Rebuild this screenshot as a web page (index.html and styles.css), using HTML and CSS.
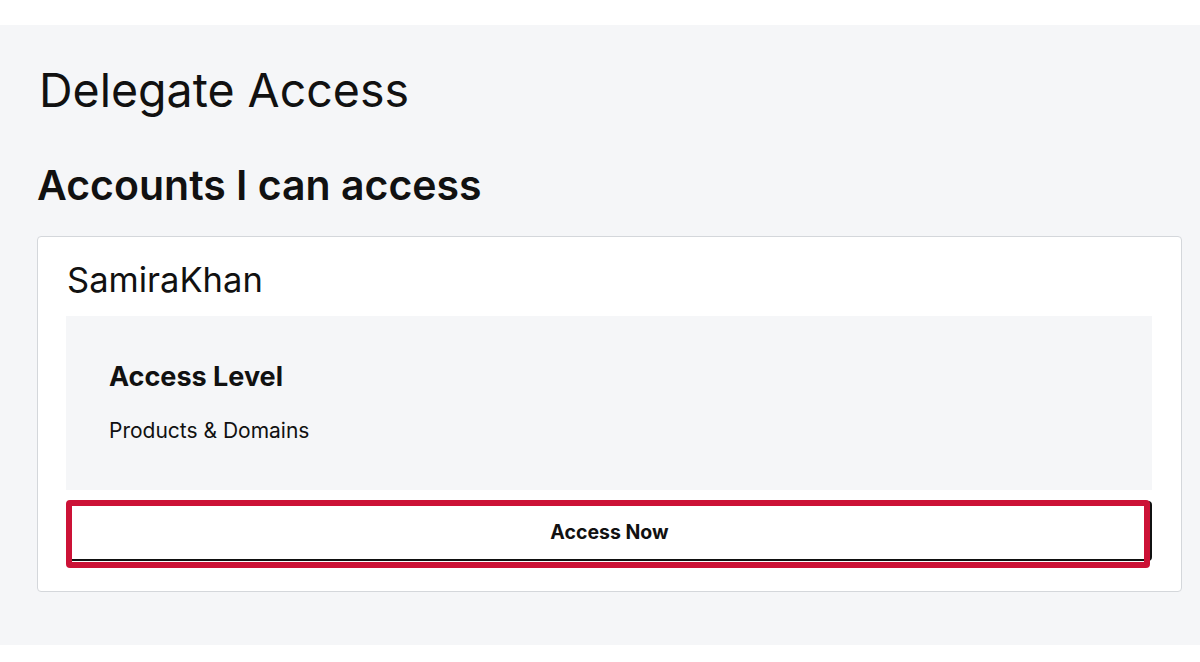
FILE: index.html
```html
<!DOCTYPE html>
<html lang="en">
<head>
<meta charset="utf-8">
<title>Delegate Access</title>
<link rel="stylesheet" href="styles.css">
</head>
<body>
<main class="page">
  <h1 class="title">Delegate Access</h1>
  <h2 class="subtitle">Accounts I can access</h2>
  <section class="card">
    <div class="card-name">SamiraKhan</div>
    <div class="panel">
      <h3 class="panel-title">Access Level</h3>
      <p class="panel-text">Products &amp; Domains</p>
    </div>
    <div class="btn-wrap">
      <button class="btn" type="button">Access Now</button>
      <span class="highlight" aria-hidden="true"></span>
    </div>
  </section>
</main>
</body>
</html>
```
FILE: styles.css
```css
* { box-sizing: border-box; }
html, body { margin: 0; padding: 0; background: #ffffff; }
body {
  font-family: Inter, "Noto Sans", sans-serif;
  color: #111111;
}
.page {
  margin-top: 25px;
  height: 620px;
  background: #f5f6f8;
  padding: 37px 18px 0 37px;
  display: flex;
  flex-direction: column;
}
.title {
  margin: 0;
  font-size: 46.5px;
  line-height: 56px;
  font-weight: 400;
  padding-left: 2px;
}
.subtitle {
  margin: 41px 0 0 0;
  font-size: 41px;
  line-height: 52px;
  font-weight: 600;
}
.card {
  margin-top: 25px;
  background: #ffffff;
  border: 1px solid #d4d7db;
  border-radius: 4px;
  padding: 22px 29px 30px 28px;
  display: flex;
  flex-direction: column;
}
.card-name {
  font-size: 34.5px;
  line-height: 41px;
  padding-left: 1px;
  margin-bottom: 16px;
}
.panel {
  background: #f5f6f8;
  height: 174px;
  padding: 44px 43px 0 43px;
}
.panel-title {
  margin: 0;
  font-size: 27px;
  line-height: 33px;
  font-weight: 700;
}
.panel-text {
  margin: 25px 0 0 0;
  font-size: 21px;
  line-height: 25px;
}
.btn-wrap {
  position: relative;
  margin-top: 11px;
  padding-left: 1px;
}
.btn {
  display: block;
  width: 100%;
  height: 60px;
  background: #ffffff;
  border: 2px solid #111111;
  border-radius: 4px;
  font-family: Inter, "Noto Sans", sans-serif;
  font-size: 19.5px;
  font-weight: 700;
  color: #111111;
  padding: 2px 0 0 0;
}
.highlight {
  position: absolute;
  left: 0;
  top: -1px;
  width: 1084px;
  height: 68px;
  border: 6px solid #cc1236;
  border-radius: 4px;
}
```
